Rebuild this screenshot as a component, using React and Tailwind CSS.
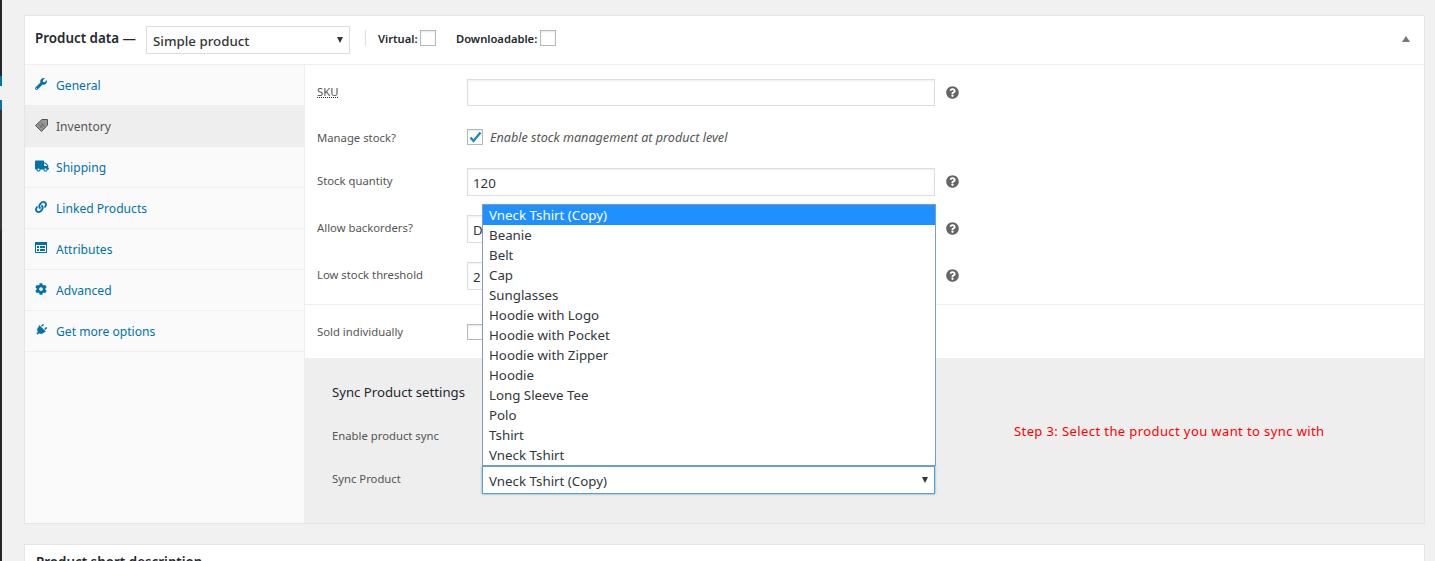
import { FaWrench, FaTruck, FaLink, FaCog, FaPlug, FaQuestionCircle } from "react-icons/fa";

const font = { fontFamily: '"Noto Sans", sans-serif' };

const tabs = [
  { name: "General", icon: <FaWrench size={12} /> },
  { name: "Inventory", icon: <TagIcon />, active: true },
  { name: "Shipping", icon: <FaTruck size={14} /> },
  { name: "Linked Products", icon: <FaLink size={12} /> },
  { name: "Attributes", icon: <AttrIcon /> },
  { name: "Advanced", icon: <FaCog size={12} /> },
  { name: "Get more options", icon: <FaPlug size={12} className="rotate-45" /> },
];

const products = [
  "Beanie",
  "Belt",
  "Cap",
  "Sunglasses",
  "Hoodie with Logo",
  "Hoodie with Pocket",
  "Hoodie with Zipper",
  "Hoodie",
  "Long Sleeve Tee",
  "Polo",
  "Tshirt",
  "Vneck Tshirt",
];

function TagIcon() {
  return (
    <svg width="13" height="13" viewBox="0 0 13 13">
      <path d="M7 .5h5.5V6l-6 6.5L.5 6.5z" fill="#999" stroke="#555" strokeWidth="1" />
      <path d="M3.5 5l4.5 4.5M5.5 3.5L10 8M4.5 9L9 4.5" stroke="#555" strokeWidth=".7" />
    </svg>
  );
}

function AttrIcon() {
  return (
    <svg width="12" height="12" viewBox="0 0 12 12">
      <path fillRule="evenodd" d="M0 0h12v11H0zM1 3v7h10V3zM2 4h2v2H2zm3 0h5v2H5zM2 7h2v2H2zm3 0h5v2H5z" fill="#0073aa" />
    </svg>
  );
}

function Help({ up }) {
  return <FaQuestionCircle size={13} className={`ml-[11px] text-[#666] ${up ? "-mt-px" : ""}`} />;
}

function Arrow() {
  return <span className="w-0 h-0 border-x-[3.5px] border-x-transparent border-t-[6px] border-t-[#32373c]" />;
}

function Field({ label, children, className = "", labelClass = "" }) {
  return (
    <div className={`flex items-center ${className}`}>
      <div className={`w-[150px] text-[11.3px] text-[#555] ${labelClass}`}>{label}</div>
      {children}
    </div>
  );
}

function TextBox({ value }) {
  return (
    <div className="w-[468px] h-full border border-[#ddd] shadow-[inset_0_1px_2px_rgba(0,0,0,0.07)] bg-white pl-[5px] pt-[3px] flex items-center text-[13.3px] text-[#32373c]">
      {value}
    </div>
  );
}

function Checkbox({ checked, className = "" }) {
  return (
    <span className={`w-4 h-4 border border-[#b4b9be] bg-white flex items-center justify-center shadow-[inset_0_1px_2px_rgba(0,0,0,0.1)] ${className}`}>
      {checked && (
        <svg width="13" height="12" viewBox="0 0 13 12">
          <path d="M1.5 6.5l3 3.5L11.5 1.5" fill="none" stroke="#1e8cbe" strokeWidth="2.4" />
        </svg>
      )}
    </span>
  );
}

export default function App() {
  return (
    <div style={font} className="h-[561px] overflow-hidden bg-[#f1f1f1] flex">
      {/* admin menu edge */}
      <div className="w-[2px] bg-[#23282d] shrink-0 flex flex-col">
        <div className="h-[76px]" />
        <div className="h-[10px] bg-[#0073aa]" />
        <div className="h-[14px] bg-[#f1f1f1]" />
        <div className="h-[10px] bg-[#0073aa]" />
        <div className="h-[120px] bg-[#32373c]" />
      </div>

      <div className="w-[1401px] ml-[22px] pt-[15px]">
        <div className="border border-[#e5e5e5] bg-white h-[509px] flex flex-col">
          {/* header */}
          <div className="h-[49px] shrink-0 border-b border-[#eee] flex items-center pl-[10px] pr-[14px]">
            <span className="text-[13.4px] font-semibold text-[#23282d] w-[111px] -mt-[3px]">Product data —</span>
            <div className="w-[204px] h-[28px] border border-[#ddd] flex items-center justify-between pl-[6px] pr-[6px] text-[13.3px] text-[#32373c] font-medium">
              <span className="pt-[4px]">Simple product</span>
              <Arrow />
            </div>
            <div className="w-px h-4 bg-[#ddd] ml-[15px] mr-[12px] -mt-[4px]" />
            <span className="text-[11.2px] font-semibold text-[#23282d] w-[42px] -mt-[2px]">Virtual:</span>
            <Checkbox className="-mt-[4px]" />
            <span className="text-[11.2px] font-semibold text-[#23282d] ml-[20px] w-[84px] -mt-[2px]">Downloadable:</span>
            <Checkbox className="-mt-[4px]" />
            <span className="ml-auto w-0 h-0 border-x-[4px] border-x-transparent border-b-[6px] border-b-[#777] -mt-[2px]" />
          </div>

          <div className="flex flex-1 min-h-0">
            {/* tabs */}
            <div className="w-[280px] shrink-0 bg-[#fafafa] border-r border-[#eee]">
              {tabs.map((t) => (
                <div
                  key={t.name}
                  className={`h-[41px] border-b border-[#eee] flex pl-[10px] pt-[12px] text-[12.1px] leading-[18px] ${t.active ? "bg-[#eee] text-[#555]" : "text-[#0073aa]"}`}
                >
                  <span className="w-[21px] h-[14px] flex items-center">{t.icon}</span>
                  {t.name}
                </div>
              ))}
            </div>

            {/* panel */}
            <div className="flex-1 min-w-0 flex flex-col">
              <div className="border-b border-[#eee] pl-3 pt-[14px] pb-[14px] flex flex-col">
                <Field label={<span className="underline decoration-dotted decoration-[#333]">SKU</span>} className="h-[27px]">
                  <TextBox />
                  <Help />
                </Field>
                <Field label="Manage stock?" className="h-[27px] mt-[18px]" labelClass="pt-[2px]">
                  <Checkbox checked className="-mt-px" />
                  <span className="ml-[7px] pt-[2px] text-[12.6px] italic text-[#555]">Enable stock management at product level</span>
                </Field>
                <Field label="Stock quantity" className="h-[28px] mt-[17px]" labelClass="-mt-[2px]">
                  <TextBox value="120" />
                  <Help up />
                </Field>
                <Field label="Allow backorders?" className="h-[28px] mt-[19px]" labelClass="-mt-[2px]">
                  <TextBox value="Do not allow" />
                  <Help up />
                </Field>
                <Field label="Low stock threshold" className="h-[28px] mt-[19px]" labelClass="-mt-[2px]">
                  <TextBox value="2" />
                  <Help up />
                </Field>
              </div>
              <div className="h-[53px] pl-3 pt-px flex items-center">
                <Field label="Sold individually">
                  <Checkbox />
                </Field>
              </div>

              {/* sync settings */}
              <div className="flex-1 bg-[#eee] pl-[27px] pt-[24px]">
                <div className="text-[13.2px] text-[#23282d] leading-5">Sync Product settings</div>
                <div className="flex items-center h-5 mt-[24px]">
                  <div className="w-[150px] text-[11.3px] text-[#555]">Enable product sync</div>
                  <div className="ml-[532px] -mt-[9px] text-[13px] tracking-[0.4px] text-[#f00] whitespace-nowrap">Step 3: Select the product you want to sync with</div>
                </div>
                <div className="flex items-center h-[28px] mt-[20px]">
                  <div className="w-[150px] -mt-[2px] text-[11.3px] text-[#555]">Sync Product</div>
                  <div className="relative w-[453px] h-full border border-[#5b9dd9] shadow-[0_0_2px_rgba(30,140,190,0.8)] bg-white flex items-center justify-between pl-[6px] pr-[6px] text-[13.3px] text-[#32373c]">
                    <span className="pt-[4px]">Vneck Tshirt (Copy)</span>
                    <Arrow />
                    <div className="absolute left-[-1px] bottom-[27px] w-[454px] border border-[#7e9bd0] bg-white">
                      <div className="h-5 pl-[6px] bg-[#1e90ff] text-white leading-5">Vneck Tshirt (Copy)</div>
                      {products.map((p) => (
                        <div key={p} className="h-5 pl-[6px] leading-5">{p}</div>
                      ))}
                    </div>
                  </div>
                </div>
              </div>
            </div>
          </div>
        </div>

        <div className="mt-[20px] border border-[#e5e5e5] bg-white h-[60px] pl-[11px] pt-[7px] text-[13.4px] font-semibold text-[#23282d]">
          Product short description
        </div>
      </div>
    </div>
  );
}
